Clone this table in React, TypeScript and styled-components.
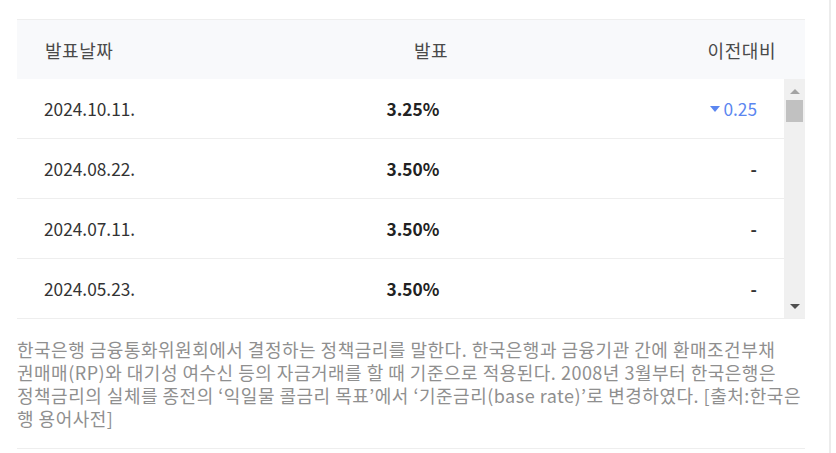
import * as React from "react";
import styled, { createGlobalStyle } from "styled-components";

const colors = {
	border: "#eeeeee",
	headBg: "#f8f9fb",
	head: "#4a4a4a",
	text: "#333333",
	strong: "#222222",
	down: "#5b86f0",
	up: "#ef5350",
	note: "#8f8f8f",
	track: "#f0f0f0",
	thumb: "#c1c1c1",
};

const GlobalStyle = createGlobalStyle`
	html, body {
		margin: 0;
		padding: 0;
		background: #fff;
	}
	body {
		font-family: "Noto Sans CJK KR", "Noto Sans", sans-serif;
		font-size: 17.3px;
		color: ${colors.text};
	}
`;

const Panel = styled.div`
	box-sizing: border-box;
	width: 831px;
	min-height: 453px;
	padding: 19px 24px 0 17px;
	border-right: 2px solid #ececec;
`;

const Head = styled.div`
	box-sizing: border-box;
	display: grid;
	grid-template-columns: 314px 200px 1fr;
	align-items: center;
	height: 60px;
	background: ${colors.headBg};
	border-top: 1px solid ${colors.border};
	color: ${colors.head};
	font-size: 18px;
	letter-spacing: 0.55px;
`;

const Cell = styled.div<{ $align?: "left" | "center" | "right"; $pad?: number }>`
	text-align: ${(p) => p.$align || "left"};
	padding-left: ${(p) => (p.$align === "left" || !p.$align ? p.$pad || 0 : 0)}px;
	padding-right: ${(p) => (p.$align === "right" ? p.$pad || 0 : 0)}px;
	white-space: nowrap;
`;

const Body = styled.div`
	box-sizing: border-box;
	display: flex;
	height: 240px;
	border-bottom: 1px solid ${colors.border};
`;

const List = styled.div`
	flex: 1;
	min-width: 0;
	overflow-y: auto;
	scrollbar-width: none;
`;

const ScrollBar = styled.div`
	display: flex;
	flex-direction: column;
	width: 21px;
	background: ${colors.track};
`;

const ScrollButton = styled.div<{ $dir: "up" | "down" }>`
	box-sizing: border-box;
	display: flex;
	justify-content: center;
	height: 21px;
	padding-top: ${(p) => (p.$dir === "up" ? 10 : 7)}px;

	&::before {
		content: "";
		width: 0;
		height: 0;
		border-left: 5px solid transparent;
		border-right: 5px solid transparent;
		${(p) =>
			p.$dir === "up"
				? "border-bottom: 5px solid #a3a3a3;"
				: "border-top: 5px solid #505050;"}
	}
`;

const Track = styled.div`
	flex: 1;
	padding: 0 2px;
`;

const Thumb = styled.div`
	height: 22px;
	background: ${colors.thumb};
`;

const Row = styled.div`
	box-sizing: border-box;
	display: grid;
	grid-template-columns: 296px 200px 1fr;
	align-items: center;
	height: 60px;
	border-bottom: 1px solid ${colors.border};
`;

const Rate = styled.span`
	font-weight: 700;
	color: ${colors.strong};
`;

const Change = styled.div<{ $dir: "up" | "down" | "none" }>`
	display: flex;
	justify-content: flex-end;
	align-items: center;
	gap: 3px;
	padding-right: 27px;
	color: ${(p) => (p.$dir === "down" ? colors.down : p.$dir === "up" ? colors.up : colors.text)};
	font-weight: ${(p) => (p.$dir === "none" ? 700 : 400)};
`;

const Arrow = styled.i<{ $dir: "up" | "down" }>`
	display: block;
	width: 0;
	height: 0;
	border-left: 5px solid transparent;
	border-right: 5px solid transparent;
	${(p) => (p.$dir === "down" ? "border-top: 6px solid currentColor;" : "border-bottom: 6px solid currentColor;")}
`;

const Note = styled.p`
	margin: 0;
	padding: 19px 0 18px;
	border-bottom: 1px solid ${colors.border};
	color: ${colors.note};
	font-size: 18px;
	letter-spacing: 0.5px;
	line-height: 23px;
	white-space: nowrap;
`;

type Item = { date: string; rate: string; diff: number };

const data: Item[] = [
	["2024.10.11.", "3.25", -0.25],
	["2024.08.22.", "3.50", 0],
	["2024.07.11.", "3.50", 0],
	["2024.05.23.", "3.50", 0],
	["2024.04.12.", "3.50", 0],
	["2024.02.22.", "3.50", 0],
	["2024.01.11.", "3.50", 0],
	["2023.11.30.", "3.50", 0],
	["2023.10.19.", "3.50", 0],
	["2023.08.24.", "3.50", 0],
	["2023.07.13.", "3.50", 0],
	["2023.05.25.", "3.50", 0],
	["2023.04.11.", "3.50", 0],
	["2023.02.23.", "3.50", 0],
	["2023.01.13.", "3.50", 0.25],
	["2022.11.24.", "3.25", 0.25],
	["2022.10.12.", "3.00", 0.5],
	["2022.08.25.", "2.50", 0.25],
	["2022.07.13.", "2.25", 0.5],
	["2022.05.26.", "1.75", 0.25],
	["2022.04.14.", "1.50", 0.25],
	["2022.02.24.", "1.25", 0],
	["2022.01.14.", "1.25", 0.25],
	["2021.11.25.", "1.00", 0.25],
	["2021.10.12.", "0.75", 0],
	["2021.08.26.", "0.75", 0.25],
	["2021.07.15.", "0.50", 0],
	["2021.05.27.", "0.50", 0],
	["2021.04.15.", "0.50", 0],
	["2021.02.25.", "0.50", 0],
	["2021.01.15.", "0.50", 0],
	["2020.11.26.", "0.50", 0],
	["2020.10.15.", "0.50", 0],
	["2020.08.27.", "0.50", 0],
	["2020.07.16.", "0.50", 0],
	["2020.05.28.", "0.50", -0.25],
].map(([date, rate, diff]) => ({ date, rate, diff } as Item));

function Diff({ value }: { value: number }) {
	if (!value) return <Change $dir="none">-</Change>;
	const dir = value < 0 ? "down" : "up";
	return (
		<Change $dir={dir}>
			<Arrow $dir={dir} />
			{Math.abs(value).toFixed(2)}
		</Change>
	);
}

export default function App() {
	return (
		<Panel>
			<GlobalStyle />
			<Head>
				<Cell $pad={28}>발표날짜</Cell>
				<Cell $align="center">발표</Cell>
				<Cell $align="right" $pad={29}>이전대비</Cell>
			</Head>
			<Body>
				<List>
					{data.map((d) => (
						<Row key={d.date}>
							<Cell $pad={27}>{d.date}</Cell>
							<Cell $align="center">
								<Rate>{d.rate}%</Rate>
							</Cell>
							<Diff value={d.diff} />
						</Row>
					))}
				</List>
				<ScrollBar>
					<ScrollButton $dir="up" />
					<Track>
						<Thumb />
					</Track>
					<ScrollButton $dir="down" />
				</ScrollBar>
			</Body>
			<Note>
				한국은행 금융통화위원회에서 결정하는 정책금리를 말한다. 한국은행과 금융기관 간에 환매조건부채
				<br />
				권매매(RP)와 대기성 여수신 등의 자금거래를 할 때 기준으로 적용된다. 2008년 3월부터 한국은행은
				<br />
				정책금리의 실체를 종전의 ‘익일물 콜금리 목표’에서 ‘기준금리(base rate)’로 변경하였다. [출처:한국은
				<br />
				행 용어사전]
			</Note>
		</Panel>
	);
}
